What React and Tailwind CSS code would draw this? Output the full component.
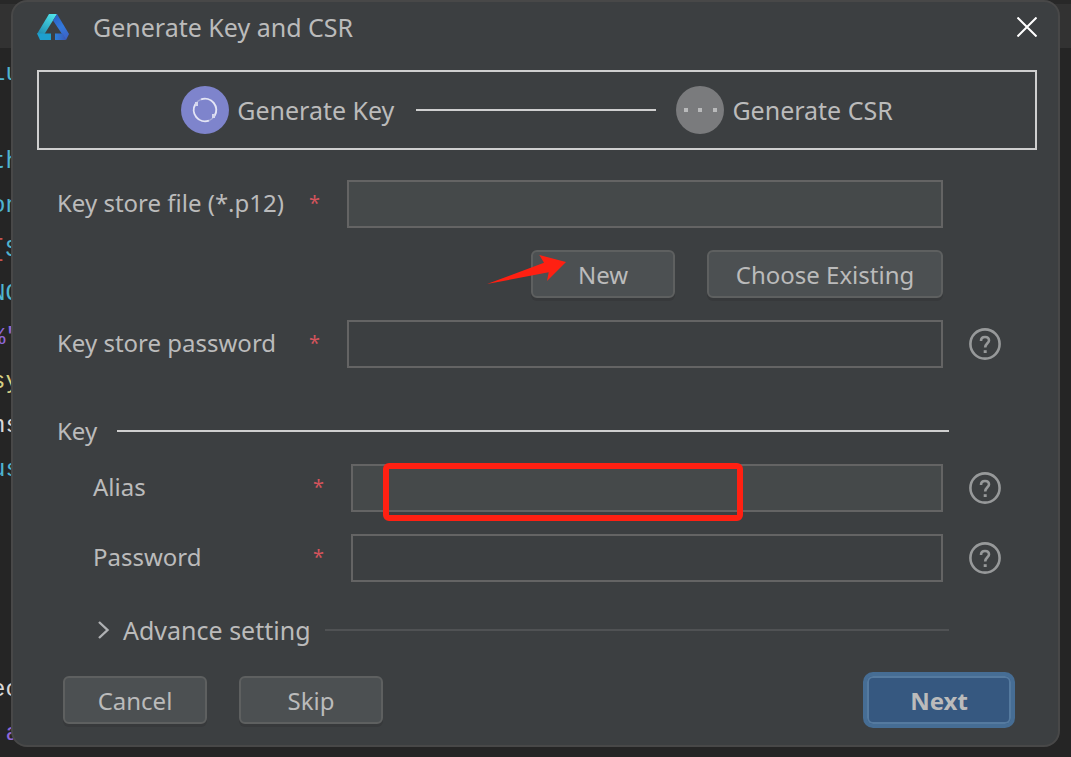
import React, { useState } from "react";

const codeLines = [
  { text: "", color: "" },
  { text: "lu", color: "text-[#4fb4d0]" },
  { text: "", color: "" },
  { text: "th", color: "text-[#4fb4d0]" },
  { text: "on", color: "text-[#4fb4d0]" },
  { text: "[$", color: "text-[#4fb4d0]", first: "text-[#c75450]" },
  { text: "NO", color: "text-[#4fb4d0]" },
  { text: '%"', color: "text-[#9068d8]" },
  { text: "sy", color: "text-[#d6cf84]" },
  { text: "ns", color: "text-[#d8d8d8]" },
  { text: "us", color: "text-[#4fb4d0]" },
  { text: "", color: "" },
  { text: "", color: "" },
  { text: "", color: "" },
  { text: "", color: "" },
  { text: "ec", color: "text-[#d8d8d8]" },
  { text: " a", color: "text-[#9068d8]" },
];

const Logo = () => (
  <svg width="32" height="26" viewBox="0 0 32 26" aria-hidden="true">
    <defs>
      <linearGradient id="logoLeft" x1="16" y1="0" x2="5" y2="20" gradientUnits="userSpaceOnUse">
        <stop offset="0" stopColor="#4fe3ea" />
        <stop offset="1" stopColor="#2191b4" />
      </linearGradient>
      <linearGradient id="logoRight" x1="18" y1="2" x2="30" y2="24" gradientUnits="userSpaceOnUse">
        <stop offset="0" stopColor="#2a62c4" />
        <stop offset="0.5" stopColor="#3379dc" />
        <stop offset="1" stopColor="#3d62c4" />
      </linearGradient>
      <linearGradient id="logoFoot" x1="18" y1="0" x2="29" y2="0" gradientUnits="userSpaceOnUse">
        <stop offset="0" stopColor="#2d80d8" />
        <stop offset="1" stopColor="#3a59b8" />
      </linearGradient>
    </defs>
    <path d="M12 0H20L7.5 20H0Z" fill="url(#logoLeft)" />
    <path d="M0 19.5H14V26H3Z" fill="#1d9fce" />
    <path d="M20 0L32 20L29 26L16 6.5Z" fill="url(#logoRight)" />
    <path d="M18 19.5H26L29 26H18Z" fill="url(#logoFoot)" />
  </svg>
);

const HelpButton = ({ label }) => (
  <button type="button" aria-label={label} className="shrink-0">
    <svg width="32" height="32" viewBox="0 0 32 32" fill="none" stroke="#97999a" aria-hidden="true">
      <circle cx="16" cy="16" r="14.6" strokeWidth="2.6" />
      <path
        d="M12 13C12 10.2 13.8 9 16 9C18.3 9 20 10.4 20 12.5C20 15.2 16.2 15.6 16.2 19.6"
        strokeWidth="2.6"
      />
      <path d="M16.2 22.2V25" strokeWidth="3" />
    </svg>
  </button>
);

const Field = ({ id, label, type = "text", filled, help, nested, children }) => (
  <div className="flex items-center">
    <label
      htmlFor={id}
      className={`flex shrink-0 items-center justify-between pr-[27px] pb-0.5 ${
        nested ? "w-[258px]" : "w-[290px]"
      }`}
    >
      {label}
      <span className="text-xl text-[#d3545c]">*</span>
    </label>
    <div className="relative min-w-0 flex-1">
      <input
        id={id}
        type={type}
        className={`block h-12 w-full border-2 border-[#646464] px-3 outline-none ${
          filled ? "bg-[#45494a]" : "bg-[#3c3f41]"
        }`}
      />
      {children}
    </div>
    <div className="flex w-[94px] shrink-0 pl-[26px]">
      {help && <HelpButton label={`About ${label}`} />}
    </div>
  </div>
);

const buttonClass =
  "h-12 rounded-md border-2 border-[#5e6060] bg-[#4c5052] pt-0.5 shadow-[0_3px_0_#37393b]";

const App = () => {
  const [advanced, setAdvanced] = useState(false);

  return (
    <div className="relative min-h-screen overflow-hidden bg-[#252525] px-[11px] pb-[10px] font-['Noto_Sans',sans-serif] text-2xl leading-8 text-[#bbbbbb]">
      {/* editor behind the dialog */}
      <div className="absolute inset-0 overflow-hidden" aria-hidden="true">
        <div className="h-1 bg-[#282828]" />
        <div className="h-11 bg-[#323232]" />
        <pre className="-mt-10 -ml-[9px] font-['Liberation_Mono',monospace] text-2xl leading-[44px]">
          {codeLines.map((line, i) => (
            <div key={i} className={`h-11 ${line.color}`}>
              <span className={line.first}>{line.text.slice(0, 1)}</span>
              {line.text.slice(1)}
            </div>
          ))}
        </pre>
      </div>

      <div
        role="dialog"
        aria-labelledby="dialog-title"
        className="relative rounded-2xl border-2 border-[#484848] bg-[#3c3f41] pr-[21px] pb-[17px] pl-6"
      >
        <header className="flex h-[50px] items-center">
          <Logo />
          <h1 id="dialog-title" className="ml-6 flex-1 text-[25px]">
            Generate Key and CSR
          </h1>
          <button type="button" aria-label="Close">
            <svg width="20" height="20" viewBox="0 0 20 20" stroke="#ffffff" strokeWidth="2" aria-hidden="true">
              <path d="M0.5 0.5L19.5 19.5M19.5 0.5L0.5 19.5" />
            </svg>
          </button>
        </header>

        <ol className="mt-[18px] flex h-20 items-center justify-center border-2 border-[#cfcfcf] text-[25px]">
          <li className="flex items-center gap-2">
            <svg width="48" height="48" viewBox="0 0 48 48" fill="none" aria-hidden="true">
              <circle cx="24" cy="24" r="24" fill="#7e84cc" />
              <path
                d="M20 13.4A11.3 11.3 0 0 1 33.5 30M28 34.6A11.3 11.3 0 0 1 14.5 18"
                stroke="#e4e5f5"
                strokeWidth="2"
              />
              <path
                d="M20 13.4A11.3 11.3 0 0 0 14.5 18M28 34.6A11.3 11.3 0 0 0 33.5 30"
                stroke="#a9add9"
                strokeWidth="1.4"
              />
              <path d="M14 16H17V20H14ZM31 28H34V32H31Z" fill="#d5d7ee" />
            </svg>
            Generate Key
          </li>
          <li className="mr-5 ml-[22px] h-0.5 w-60 bg-[#cfcfcf]" aria-hidden="true" />
          <li className="flex items-center gap-2">
            <svg width="48" height="48" viewBox="0 0 48 48" aria-hidden="true">
              <circle cx="24" cy="24" r="24" fill="#7a7b7d" />
              <path d="M8 22H12V26H8ZM22 22H26V26H22ZM37 22H41V26H37Z" fill="#b9babb" />
            </svg>
            Generate CSR
          </li>
        </ol>

        <form className="pt-[30px] pl-5" onSubmit={(e) => e.preventDefault()}>
          <div className="flex flex-col gap-[22px]">
            <Field id="store-file" label="Key store file (*.p12)" filled />
            <div className="flex justify-end gap-8 pr-[94px]">
              <div className="relative">
                <button type="button" className={`${buttonClass} w-36`}>
                  New
                </button>
                <svg
                  className="pointer-events-none absolute top-1 -left-11"
                  width="80"
                  height="32"
                  viewBox="0 0 80 32"
                  aria-hidden="true"
                >
                  <path d="M0 30L57 8.7L52.3 1L79 8L60 27L61.7 18.3Z" fill="#ff2012" />
                </svg>
              </div>
              <button type="button" className={`${buttonClass} w-[236px]`}>
                Choose Existing
              </button>
            </div>
            <Field id="store-password" label="Key store password" type="password" help />
          </div>

          <fieldset className="mt-[47px]">
            <legend className="flex w-full items-center gap-5 pr-[88px]">
              Key
              <span className="h-0.5 flex-1 bg-[#cfcfcf]" />
            </legend>
            <div className="mt-[17px] flex flex-col gap-[22px] pl-9">
              <Field id="alias" label="Alias" filled help nested>
                <div className="pointer-events-none absolute -top-px left-8 h-[58px] w-[360px] rounded-md border-6 border-[#ff2012]" />
              </Field>
              <Field id="key-password" label="Password" type="password" help nested />
            </div>
          </fieldset>

          <div className="mt-8 flex items-center gap-[14px] pr-[88px] pl-9">
            <button
              type="button"
              aria-expanded={advanced}
              onClick={() => setAdvanced(!advanced)}
              className="flex items-center gap-3 text-[25px]"
            >
              <svg
                className={advanced ? "rotate-90" : ""}
                width="18"
                height="20"
                viewBox="0 0 18 20"
                fill="none"
                stroke="#afb1b3"
                strokeWidth="2.4"
                aria-hidden="true"
              >
                <path d="M6 2L14.5 10L6 18" />
              </svg>
              Advance setting
            </button>
            <span className="h-0.5 flex-1 bg-[#505254]" />
          </div>

          <footer className="mt-[26px] flex items-center gap-8 pr-[22px] pl-1.5">
            <button type="button" className={`${buttonClass} w-36`}>
              Cancel
            </button>
            <button type="button" className={`${buttonClass} w-36`}>
              Skip
            </button>
            <button
              type="submit"
              className="ml-auto h-14 w-[152px] rounded-[10px] border-4 border-[#466d94] bg-[#365880] pt-0.5 font-bold inset-ring-2 inset-ring-[#557a9f]"
            >
              Next
            </button>
          </footer>
        </form>
      </div>
    </div>
  );
};

export default App;
